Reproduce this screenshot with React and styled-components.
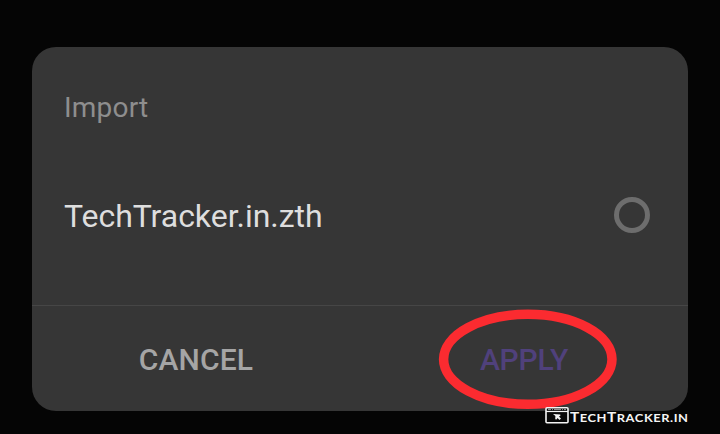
import React from "react";
import styled, { createGlobalStyle } from "styled-components";

const GlobalStyle = createGlobalStyle`
  * { box-sizing: border-box; }
  body { margin: 0; background: #050505; overflow: hidden; }
`;

const Screen = styled.main`
  position: relative;
  width: 720px;
  height: 434px;
  padding: 47px 32px 23px;
  background: #050505;
  font-family: Roboto, "Liberation Sans", sans-serif;
`;

const Dialog = styled.section`
  display: flex;
  flex-direction: column;
  height: 364px;
  border-radius: 24px;
  background: #363636;
`;

const Title = styled.h1`
  margin: 0;
  padding: 43px 32px 0;
  height: 120px;
  font-size: 28px;
  line-height: 36px;
  font-weight: 400;
  letter-spacing: 0.2px;
  color: #8e8e8e;
`;

const Option = styled.label`
  display: flex;
  align-items: center;
  justify-content: space-between;
  height: 96px;
  padding: 0 38px 0 32px;
`;

const FileName = styled.span`
  padding-top: 2px;
  font-size: 32px;
  line-height: 40px;
  letter-spacing: -0.04px;
  color: #dedede;
`;

const Radio = styled.span`
  width: 36px;
  height: 36px;
  border: 5px solid #6d6d6d;
  border-radius: 50%;
`;

const Actions = styled.footer`
  display: grid;
  grid-template-columns: 1fr 1fr;
  height: 106px;
  margin-top: auto;
  border-top: 1px solid #464646;
`;

const Action = styled.button`
  padding: 3px 0 0;
  border: 0;
  background: none;
  font: 500 30px/36px Roboto, "Liberation Sans", sans-serif;
  letter-spacing: ${(p) => (p.$accent ? "-0.15px" : "0.15px")};
  color: ${(p) => (p.$accent ? "#50417c" : "#a5a5a5")};
`;

const Highlight = styled.svg`
  position: absolute;
  left: 436px;
  top: 307px;
`;

const Watermark = styled.div`
  position: absolute;
  left: 545px;
  top: 406px;
  display: flex;
  gap: 1px;
  color: #f4f4f4;
`;

const Brand = styled.span`
  padding-top: 3px;
  font: 700 13.8px/16px Lato, sans-serif;
  letter-spacing: 0.5px;
  white-space: nowrap;
  transform: scaleX(1.11);
  transform-origin: left;
`;

const SmallCaps = styled.span`
  font-size: 11.6px;
`;

export default function App() {
  return (
    <>
      <GlobalStyle />
      <Screen>
        <Dialog>
          <Title>Import</Title>
          <Option>
            <FileName>TechTracker.in.zth</FileName>
            <Radio />
          </Option>
          <Actions>
            <Action>CANCEL</Action>
            <Action $accent>APPLY</Action>
          </Actions>
        </Dialog>
        <Highlight width="184" height="106" viewBox="0 0 184 106">
          <ellipse cx="91.8" cy="52.3" rx="84.2" ry="45" fill="none" stroke="#fb2b30" strokeWidth="9.5" />
        </Highlight>
        <Watermark>
          <svg width="24" height="18" viewBox="0 0 24 18">
            <rect x="1" y="1.8" width="22" height="15" rx="1" fill="#080808" stroke="#f4f4f4" strokeWidth="1.6" />
            <path d="M1 5.5H23" stroke="#f4f4f4" strokeWidth="1.2" />
            <path d="M3 3.6H6M7 3.6H8M9 3.6H16M17 3.6H18M19 3.6H21" stroke="#c4c4c4" strokeWidth=".8" />
            <path d="M8 8L15.3 8.5V10L13.8 10.5L16 12.6L14.5 14L12.5 12L11.5 13.5L10.2 13.2L10.4 10Z" fill="#f4f4f4" />
          </svg>
          <Brand>
            T<SmallCaps>ECH</SmallCaps>T<SmallCaps>RACKER.IN</SmallCaps>
          </Brand>
        </Watermark>
      </Screen>
    </>
  );
}
